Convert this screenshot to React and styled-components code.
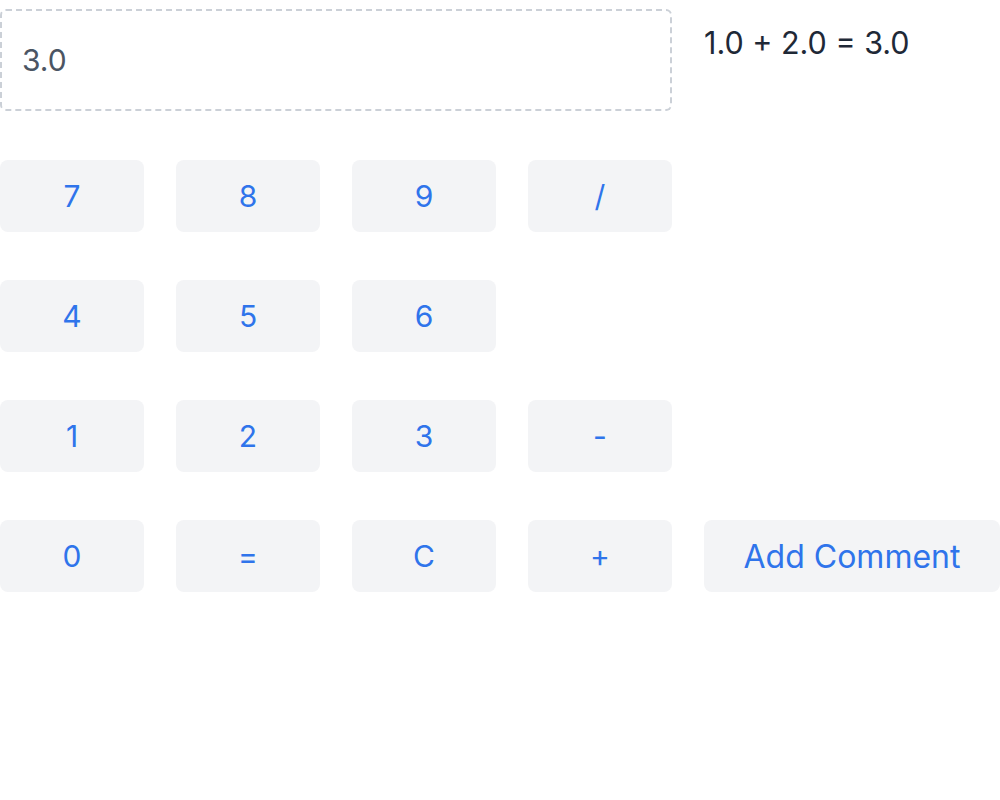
import styled, { createGlobalStyle } from "styled-components";

const GlobalStyle = createGlobalStyle`
  body {
    margin: 0;
    background: #ffffff;
    font-family: Inter, "Liberation Sans", sans-serif;
  }
`;

const Page = styled.div`
  display: flex;
  flex-direction: column;
  gap: 49px;
  padding-top: 9px;
`;

const Header = styled.div`
  display: flex;
  align-items: flex-start;
  gap: 32px;
`;

const Display = styled.div`
  box-sizing: border-box;
  width: 672px;
  height: 102px;
  border: 2px dashed #cbd0d7;
  border-radius: 6px;
  padding: 0 20px;
  display: flex;
  align-items: center;
  font-size: 30px;
  color: #4b5563;
`;

const History = styled.div`
  padding-top: 16px;
  font-size: 30.5px;
  line-height: 36px;
  color: #1f2937;
`;

const Keypad = styled.div`
  display: grid;
  grid-template-columns: repeat(4, 144px) auto;
  grid-auto-rows: 72px;
  column-gap: 32px;
  row-gap: 48px;
  justify-content: start;
`;

const Key = styled.button`
  grid-column: ${(p) => p.$col || "auto"};
  width: ${(p) => (p.$wide ? "296px" : "auto")};
  border: none;
  border-radius: 8px;
  background: #f3f4f6;
  color: #2f74eb;
  font-family: inherit;
  font-size: ${(p) => (p.$wide ? "32px" : "30px")};
  padding: 0;
  cursor: pointer;
`;

const rows = [
  ["7", "8", "9", "/"],
  ["4", "5", "6"],
  ["1", "2", "3", "-"],
  ["0", "=", "C", "+"],
];

export default function App() {
  return (
    <>
      <GlobalStyle />
      <Page>
        <Header>
          <Display>3.0</Display>
          <History>1.0 + 2.0 = 3.0</History>
        </Header>
        <Keypad>
          {rows.map((row, r) =>
            row.map((k, i) => (
              <Key key={r + "-" + k} $col={i === 0 ? 1 : undefined}>
                {k}
              </Key>
            ))
          )}
          <Key $col={5} $wide style={{ gridRow: 4 }}>
            Add Comment
          </Key>
        </Keypad>
      </Page>
    </>
  );
}
